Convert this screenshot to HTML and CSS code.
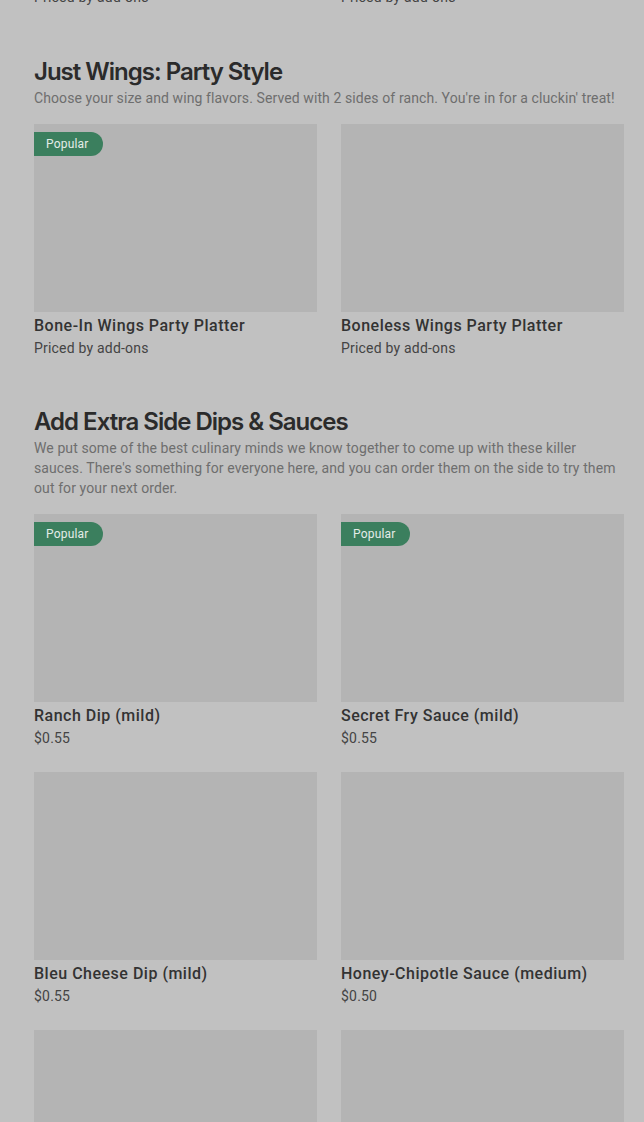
FILE: index.html
```html
<!DOCTYPE html>
<html>
<head>
<meta charset="utf-8">
<link rel="stylesheet" href="styles.css">
</head>
<body>
<main class="menu">
  <div class="stub">
    <div class="stub-price">Priced by add-ons</div>
    <div class="stub-price">Priced by add-ons</div>
  </div>

  <section class="section">
    <h2 class="sec-title">Just Wings: Party Style</h2>
    <p class="sec-desc">Choose your size and wing flavors. Served with 2 sides of ranch. You're in for a cluckin' treat!</p>
    <div class="grid">
      <div class="card">
        <div class="thumb"><span class="badge">Popular</span></div>
        <div class="name">Bone-In Wings Party Platter</div>
        <div class="price">Priced by add-ons</div>
      </div>
      <div class="card">
        <div class="thumb"></div>
        <div class="name">Boneless Wings Party Platter</div>
        <div class="price">Priced by add-ons</div>
      </div>
    </div>
  </section>

  <section class="section">
    <h2 class="sec-title">Add Extra Side Dips &amp; Sauces</h2>
    <p class="sec-desc">We put some of the best culinary minds we know together to come up with these killer sauces. There's something for everyone here, and you can order them on the side to try them out for your next order.</p>
    <div class="grid">
      <div class="card">
        <div class="thumb"><span class="badge">Popular</span></div>
        <div class="name">Ranch Dip (mild)</div>
        <div class="price">$0.55</div>
      </div>
      <div class="card">
        <div class="thumb"><span class="badge">Popular</span></div>
        <div class="name">Secret Fry Sauce (mild)</div>
        <div class="price">$0.55</div>
      </div>
      <div class="card">
        <div class="thumb"></div>
        <div class="name">Bleu Cheese Dip (mild)</div>
        <div class="price">$0.55</div>
      </div>
      <div class="card">
        <div class="thumb"></div>
        <div class="name">Honey-Chipotle Sauce (medium)</div>
        <div class="price">$0.50</div>
      </div>
      <div class="card">
        <div class="thumb"></div>
        <div class="name">Garlic Parmesan Sauce</div>
        <div class="price">$0.55</div>
      </div>
      <div class="card">
        <div class="thumb"></div>
        <div class="name">Buffalo Sauce</div>
        <div class="price">$0.55</div>
      </div>
    </div>
  </section>
</main>
</body>
</html>
```

FILE: styles.css
```css
html, body {
  margin: 0;
  padding: 0;
  background: #c1c1c1;
  overflow: hidden;
}

.menu {
  padding: 0 20px 0 34px;
  font-family: Roboto, "Liberation Sans", sans-serif;
  color: #333;
}

.stub {
  display: grid;
  grid-template-columns: 1fr 1fr;
  column-gap: 24px;
  margin-top: -13px;
}

.stub-price,
.price {
  font-size: 14px;
  line-height: 20px;
  color: #444;
  letter-spacing: 0.2px;
}

.section {
  padding-top: 49px;
}

.section + .section {
  padding-top: 48px;
}

.sec-title {
  margin: 0;
  font-family: Inter, "Liberation Sans", sans-serif;
  font-size: 24px;
  line-height: 32px;
  font-weight: 600;
  letter-spacing: -1px;
  color: #2b2b2b;
}

.sec-desc {
  margin: 0 0 16px;
  font-size: 14px;
  line-height: 20px;
  letter-spacing: 0.1px;
  color: #6e6e6e;
}

.grid {
  display: grid;
  grid-template-columns: 1fr 1fr;
  column-gap: 24px;
  row-gap: 24px;
}

.thumb {
  height: 188px;
  background: #b4b4b4;
  position: relative;
}

.badge {
  position: absolute;
  top: 8px;
  left: 0;
  height: 24px;
  line-height: 24px;
  padding: 0 14px 0 12px;
  background: #3b7f5e;
  color: #e4ece8;
  font-size: 12px;
  letter-spacing: 0.2px;
  border-radius: 0 12px 12px 0;
}

.name {
  margin-top: 2px;
  font-size: 16px;
  line-height: 24px;
  font-weight: 500;
  letter-spacing: 0.5px;
  color: #333;
}
```
